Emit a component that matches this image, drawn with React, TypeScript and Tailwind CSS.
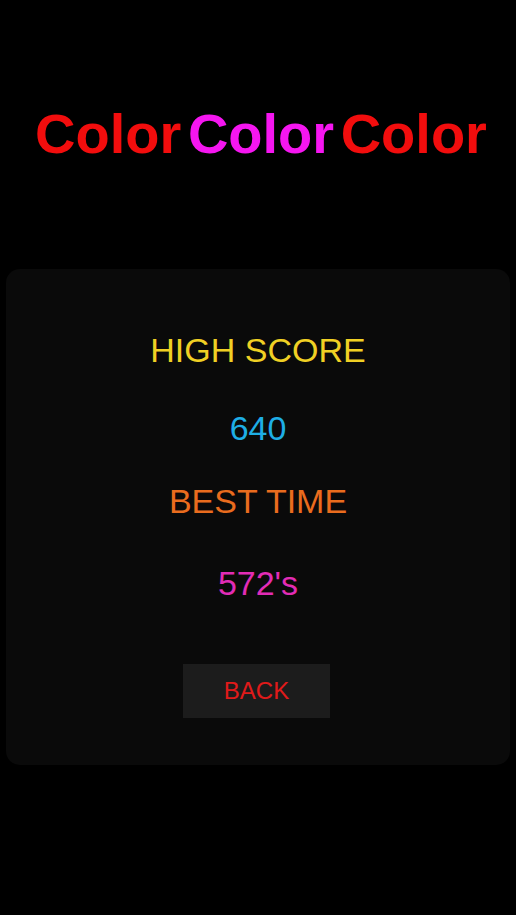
import React from 'react';

const words = [
  { text: 'Color', color: 'text-[#f20d0d]' },
  { text: 'Color', color: 'text-[#f516f0]' },
  { text: 'Color', color: 'text-[#f20d0d]' },
];

export default function App() {
  return (
    <div className="min-h-screen bg-black font-['Liberation_Sans',Arial,sans-serif]">
      <h1 className="pt-[106px] pl-[6px] text-center text-[56px] font-bold leading-none [word-spacing:-9px]">
        {words.map((w, i) => (
          <React.Fragment key={i}>
            {i > 0 && ' '}
            <span className={w.color}>{w.text}</span>
          </React.Fragment>
        ))}
      </h1>

      <div className="mx-[6px] mt-[107px] flex flex-col items-center rounded-[14px] bg-[#0a0a0a] pt-[64px] pb-[47px] text-[34px] leading-none">
        <p className="text-[#f0d024]">HIGH SCORE</p>
        <p className="mt-[44px] text-[#1eaee6]">640</p>
        <p className="mt-[39px] text-[#ea6c1e]">BEST TIME</p>
        <p className="mt-[48px] text-[#e22cb6]">572's</p>
        <button className="mt-[64px] mr-[3px] flex h-[54px] w-[147px] items-center justify-center bg-[#1c1c1c] text-[24px] text-[#e01a1a]">
          BACK
        </button>
      </div>
    </div>
  );
}
